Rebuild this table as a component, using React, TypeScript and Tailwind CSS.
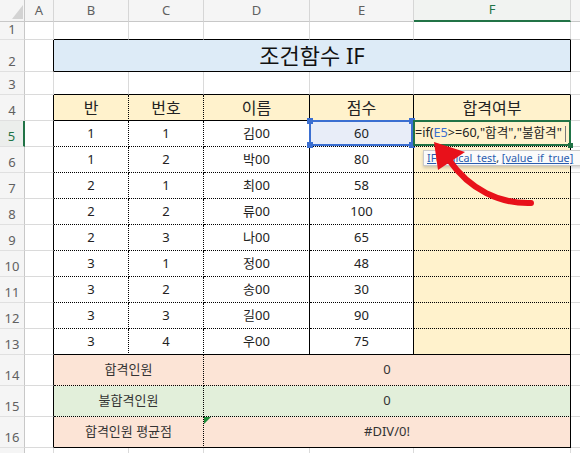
import { Fragment } from "react";

const FONT = "font-['Noto_Sans','Noto_Sans_CJK_KR',sans-serif]";

// border helpers (one rule per side so they never fight)
const G_R = "[border-right:1px_solid_#dadada]";
const G_B = "[border-bottom:1px_solid_#dadada]";
const S_R = "[border-right:1px_solid_#000]";
const S_B = "[border-bottom:1px_solid_#000]";
const D_R = "[border-right:1px_dotted_#000]";
const D_B = "[border-bottom:1px_dotted_#000]";

const YELLOW = "bg-[#fff2cc]";
const cell = "flex items-center justify-center text-[13px] text-[#222] whitespace-nowrap";

const data: [number, number, string, number][] = [
  [1, 1, "김00", 60],
  [1, 2, "박00", 80],
  [2, 1, "최00", 58],
  [2, 2, "류00", 100],
  [2, 3, "나00", 65],
  [3, 1, "정00", 48],
  [3, 2, "송00", 30],
  [3, 3, "길00", 90],
  [3, 4, "우00", 75],
];

const RowHead = ({ n, active = false }: { n?: number; active?: boolean }) =>
  active ? (
    <div className="flex items-end justify-center bg-[#eceeec] text-[13px] leading-[19px] text-[#217346] [border-right:2px_solid_#217346] [border-bottom:1px_solid_#e0e0e0]">
      {n}
    </div>
  ) : (
    <div className="flex items-end justify-center bg-[#f5f5f5] text-[13px] leading-[19px] text-[#606060] [border-right:1px_solid_#c8c8c8] [border-bottom:1px_solid_#e0e0e0]">
      {n}
    </div>
  );

const ColHead = ({ label }: { label: string }) => (
  <div className="flex items-center justify-center bg-[#f5f5f5] text-[13px] text-[#606060] [border-right:1px_solid_#d6d6d6] [border-bottom:1px_solid_#c8c8c8]">
    {label}
  </div>
);

export default function App() {
  return (
    <div className={`relative w-[580px] h-[453px] overflow-hidden bg-white ${FONT}`}>
      <div className="grid grid-cols-[25px_29px_75px_75px_106px_104px_157px_9px] grid-rows-[22px_18px_32px_23px_repeat(10,26px)_31px_31px_31px_5px]">
        {/* column headers */}
        <div className="relative bg-[#f5f5f5] [border-right:1px_solid_#c8c8c8] [border-bottom:1px_solid_#c8c8c8]">
          <svg className="absolute left-[12px] top-[5px]" width="11" height="14" viewBox="0 0 11 14">
            <polygon points="11,0 11,14 0,14" fill="#d3d3d3" />
          </svg>
        </div>
        {["A", "B", "C", "D", "E"].map((c) => (
          <ColHead key={c} label={c} />
        ))}
        <div className="flex items-center justify-center bg-[#f1f3f1] text-[13px] text-[#217346] [border-right:1px_solid_#d6d6d6] [border-bottom:2px_solid_#217346]">
          F
        </div>
        <div className="bg-[#f5f5f5] [border-bottom:1px_solid_#c8c8c8]" />

        {/* row 1 */}
        <RowHead n={1} />
        <div className={`${G_R} ${G_B}`} />
        {[0, 1, 2, 3, 4].map((i) => (
          <div key={i} className={`${G_R} ${S_B}`} />
        ))}
        <div className={G_B} />

        {/* row 2 - title */}
        <RowHead n={2} />
        <div className={`${S_R} ${G_B}`} />
        <div className={`col-span-5 flex items-center justify-center bg-[#ddebf7] text-[22px] text-[#111] ${S_R} ${S_B}`}>
          조건함수 IF
        </div>
        <div className={G_B} />

        {/* row 3 */}
        <RowHead n={3} />
        <div className={`${G_R} ${G_B}`} />
        {[0, 1, 2, 3, 4].map((i) => (
          <div key={i} className={`${G_R} ${S_B}`} />
        ))}
        <div className={G_B} />

        {/* row 4 - headings */}
        <RowHead n={4} />
        <div className={`${S_R} ${G_B}`} />
        <div className={`${cell} text-[16px]! ${YELLOW} ${D_R} ${S_B}`}>반</div>
        <div className={`${cell} text-[16px]! ${YELLOW} ${D_R} ${S_B}`}>번호</div>
        <div className={`${cell} text-[16px]! ${YELLOW} ${S_R} ${S_B}`}>이름</div>
        <div className={`${cell} text-[16px]! ${YELLOW} ${S_R} ${S_B}`}>점수</div>
        <div className={`${cell} text-[16px]! ${YELLOW} ${S_R} ${S_B}`}>합격여부</div>
        <div className={G_B} />

        {/* rows 5-13 */}
        {data.map((d, i) => {
          const r = i + 5;
          const b = r === 13 ? S_B : D_B;
          return (
            <Fragment key={r}>
              <RowHead n={r} active={r === 5} />
              <div className={`${S_R} ${G_B}`} />
              <div className={`${cell} ${D_R} ${b}`}>{d[0]}</div>
              <div className={`${cell} ${D_R} ${b}`}>{d[1]}</div>
              <div className={`${cell} ${S_R} ${b}`}>{d[2]}</div>
              {r === 5 ? (
                <div className={`relative ${cell} bg-[#e8edf8] ${S_R} ${b}`}>
                  {d[3]}
                  <div className="absolute -left-[1px] -top-[1px] right-0 bottom-0 border-2 border-[#3b6fd1]">
                    <span className="absolute -left-[4px] -top-[4px] w-[6px] h-[6px] bg-[#3b6fd1]" />
                    <span className="absolute -right-[4px] -top-[4px] w-[6px] h-[6px] bg-[#3b6fd1]" />
                    <span className="absolute -left-[4px] -bottom-[4px] w-[6px] h-[6px] bg-[#3b6fd1]" />
                    <span className="absolute -right-[4px] -bottom-[4px] w-[6px] h-[6px] bg-[#3b6fd1]" />
                  </div>
                </div>
              ) : (
                <div className={`${cell} ${S_R} ${b}`}>{d[3]}</div>
              )}
              {r === 5 ? (
                <div className={`relative flex items-center pl-[1px] text-[12.6px] text-[#222] whitespace-nowrap ${YELLOW} ${S_R} ${b}`}>
                  <span>{"=if("}</span>
                  <span className="text-[#3b6fd1]">E5</span>
                  <span>{'>=60,"합격","불합격"'}</span>
                  <span className="ml-[3px] w-px h-[16px] bg-[#777]" />
                  <div className="absolute -left-[1px] -top-[1px] -right-[1px] bottom-0 border-2 border-[#217346]">
                    <span className="absolute -right-[4px] -bottom-[4px] w-[5px] h-[5px] bg-[#217346]" />
                  </div>
                </div>
              ) : (
                <div className={`${YELLOW} ${S_R} ${b}`} />
              )}
              <div className={G_B} />
            </Fragment>
          );
        })}

        {/* rows 14-16 summary */}
        <RowHead n={14} />
        <div className={`${S_R} ${G_B}`} />
        <div className={`col-span-2 ${cell} text-[#333]! bg-[#fce4d6] ${D_R} ${D_B}`}>합격인원</div>
        <div className={`col-span-3 ${cell} text-[#333]! bg-[#fce4d6] ${S_R} ${D_B}`}>0</div>
        <div className={G_B} />

        <RowHead n={15} />
        <div className={`${S_R} ${G_B}`} />
        <div className={`col-span-2 ${cell} text-[#333]! bg-[#e2efda] ${D_R} ${D_B}`}>불합격인원</div>
        <div className={`col-span-3 ${cell} text-[#333]! bg-[#e2efda] ${S_R} ${D_B}`}>0</div>
        <div className={G_B} />

        <RowHead n={16} />
        <div className={`${S_R} ${G_B}`} />
        <div className={`col-span-2 ${cell} text-[#333]! bg-[#fce4d6] ${D_R} ${S_B}`}>합격인원 평균점</div>
        <div className={`relative col-span-3 ${cell} text-[#333]! bg-[#fce4d6] ${S_R} ${S_B}`}>
          <svg className="absolute left-0 top-0" width="7" height="7" viewBox="0 0 7 7">
            <polygon points="0,0 7,0 0,7" fill="#1e8c3a" />
          </svg>
          #DIV/0!
        </div>
        <div className={G_B} />

        {/* partial row 17 */}
        <div className="bg-[#f5f5f5] [border-right:1px_solid_#c8c8c8]" />
        <div className={G_R} />
        {[0, 1, 2, 3, 4].map((i) => (
          <div key={i} className={G_R} />
        ))}
        <div />
      </div>

      {/* function tooltip */}
      <div className="absolute left-[423px] top-[150px] h-[16px] w-[170px] bg-[#fafafa] border border-[#cacaca] shadow-[0_2px_3px_rgba(0,0,0,0.18)] pl-[3px] text-[10.8px] leading-[14px] text-[#333] whitespace-nowrap">
        <span className="text-[#2a5db0] underline">IF</span>
        <span>(</span>
        <span className="text-[#2a5db0] underline">logical_test</span>
        <span>, </span>
        <span className="text-[#2a5db0] underline">[value_if_true]</span>
      </div>

      {/* red arrow */}
      <svg className="absolute left-0 top-0 pointer-events-none" width="580" height="453">
        <path d="M531 203 C 500 204 470 190 449 160" stroke="#e8111a" strokeWidth="6" fill="none" strokeLinecap="round" />
        <polygon points="434,142 438,170 465,152" fill="#e8111a" />
      </svg>
    </div>
  );
}
